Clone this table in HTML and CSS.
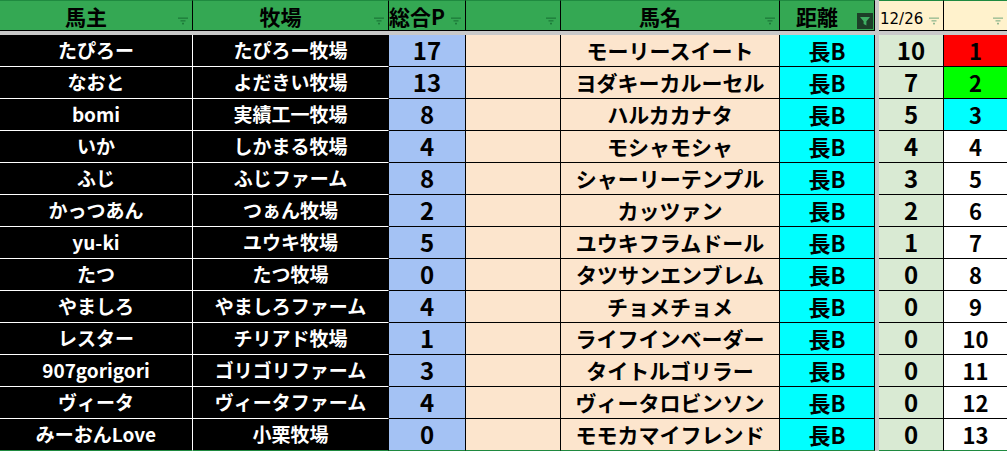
FILE: index.html
```html
<!DOCTYPE html>
<html lang="ja">
<head>
<meta charset="utf-8">
<link rel="stylesheet" href="styles.css">
</head>
<body>
<div class="sheet">
  <div class="row head">
    <div class="c w1 hg">馬主<svg class="flt" viewBox="0 0 10 8"><rect x="0" y="0.5" width="10" height="1.3"/><rect x="2.5" y="3.2" width="5" height="1.3"/><rect x="4" y="5.8" width="2" height="1.6"/></svg></div>
    <div class="c w2 hg">牧場<svg class="flt" viewBox="0 0 10 8"><rect x="0" y="0.5" width="10" height="1.3"/><rect x="2.5" y="3.2" width="5" height="1.3"/><rect x="4" y="5.8" width="2" height="1.6"/></svg></div>
    <div class="c w3 hg">総合P<svg class="flt" viewBox="0 0 10 8"><rect x="0" y="0.5" width="10" height="1.3"/><rect x="2.5" y="3.2" width="5" height="1.3"/><rect x="4" y="5.8" width="2" height="1.6"/></svg></div>
    <div class="c w4 hg"><svg class="flt" viewBox="0 0 10 8"><rect x="0" y="0.5" width="10" height="1.3"/><rect x="2.5" y="3.2" width="5" height="1.3"/><rect x="4" y="5.8" width="2" height="1.6"/></svg></div>
    <div class="c w5 hg">馬名<svg class="flt" viewBox="0 0 10 8"><rect x="0" y="0.5" width="10" height="1.3"/><rect x="2.5" y="3.2" width="5" height="1.3"/><rect x="4" y="5.8" width="2" height="1.6"/></svg></div>
    <div class="c w6 hg">距離<svg class="fbtn" viewBox="0 0 16 16"><rect width="16" height="16" fill="#1d3f28"/><path d="M3 4h10l-3.6 4.3v4.2l-2.8-1.4v-2.8z" fill="#3fae62"/></svg></div>
    <div class="gap"></div>
    <div class="c w7 hy"><span class="date">12/26</span><svg class="flt" viewBox="0 0 10 8"><rect x="0" y="0.5" width="10" height="1.3"/><rect x="2.5" y="3.2" width="5" height="1.3"/><rect x="4" y="5.8" width="2" height="1.6"/></svg></div>
    <div class="c w8 hy"><svg class="flt" viewBox="0 0 10 8"><rect x="0" y="0.5" width="10" height="1.3"/><rect x="2.5" y="3.2" width="5" height="1.3"/><rect x="4" y="5.8" width="2" height="1.6"/></svg></div>
  </div>
  <div class="strip"></div>

  <div class="row"><div class="c w1 bk">たぴろー</div><div class="c w2 bk bk2">たぴろー牧場</div><div class="c w3 bl">17</div><div class="c w4 pe"></div><div class="c w5 pe">モーリースイート</div><div class="c w6 cy">長B</div><div class="gap"></div><div class="c w7 lg">10</div><div class="c w8 rank red">1</div></div>
  <div class="row"><div class="c w1 bk">なおと</div><div class="c w2 bk bk2">よだきい牧場</div><div class="c w3 bl">13</div><div class="c w4 pe"></div><div class="c w5 pe">ヨダキーカルーセル</div><div class="c w6 cy">長B</div><div class="gap"></div><div class="c w7 lg">7</div><div class="c w8 rank grn">2</div></div>
  <div class="row"><div class="c w1 bk">bomi</div><div class="c w2 bk bk2">実績工一牧場</div><div class="c w3 bl">8</div><div class="c w4 pe"></div><div class="c w5 pe">ハルカカナタ</div><div class="c w6 cy">長B</div><div class="gap"></div><div class="c w7 lg">5</div><div class="c w8 rank cy">3</div></div>
  <div class="row"><div class="c w1 bk">いか</div><div class="c w2 bk bk2">しかまる牧場</div><div class="c w3 bl">4</div><div class="c w4 pe"></div><div class="c w5 pe">モシャモシャ</div><div class="c w6 cy">長B</div><div class="gap"></div><div class="c w7 lg">4</div><div class="c w8 rank">4</div></div>
  <div class="row"><div class="c w1 bk">ふじ</div><div class="c w2 bk bk2">ふじファーム</div><div class="c w3 bl">8</div><div class="c w4 pe"></div><div class="c w5 pe">シャーリーテンプル</div><div class="c w6 cy">長B</div><div class="gap"></div><div class="c w7 lg">3</div><div class="c w8 rank">5</div></div>
  <div class="row"><div class="c w1 bk">かっつあん</div><div class="c w2 bk bk2">つぁん牧場</div><div class="c w3 bl">2</div><div class="c w4 pe"></div><div class="c w5 pe">カッツァン</div><div class="c w6 cy">長B</div><div class="gap"></div><div class="c w7 lg">2</div><div class="c w8 rank">6</div></div>
  <div class="row"><div class="c w1 bk">yu-ki</div><div class="c w2 bk bk2">ユウキ牧場</div><div class="c w3 bl">5</div><div class="c w4 pe"></div><div class="c w5 pe">ユウキフラムドール</div><div class="c w6 cy">長B</div><div class="gap"></div><div class="c w7 lg">1</div><div class="c w8 rank">7</div></div>
  <div class="row"><div class="c w1 bk">たつ</div><div class="c w2 bk bk2">たつ牧場</div><div class="c w3 bl">0</div><div class="c w4 pe"></div><div class="c w5 pe">タツサンエンブレム</div><div class="c w6 cy">長B</div><div class="gap"></div><div class="c w7 lg">0</div><div class="c w8 rank">8</div></div>
  <div class="row"><div class="c w1 bk">やましろ</div><div class="c w2 bk bk2">やましろファーム</div><div class="c w3 bl">4</div><div class="c w4 pe"></div><div class="c w5 pe">チョメチョメ</div><div class="c w6 cy">長B</div><div class="gap"></div><div class="c w7 lg">0</div><div class="c w8 rank">9</div></div>
  <div class="row"><div class="c w1 bk">レスター</div><div class="c w2 bk bk2">チリアド牧場</div><div class="c w3 bl">1</div><div class="c w4 pe"></div><div class="c w5 pe">ライフインベーダー</div><div class="c w6 cy">長B</div><div class="gap"></div><div class="c w7 lg">0</div><div class="c w8 rank">10</div></div>
  <div class="row"><div class="c w1 bk">907gorigori</div><div class="c w2 bk bk2">ゴリゴリファーム</div><div class="c w3 bl">3</div><div class="c w4 pe"></div><div class="c w5 pe">タイトルゴリラー</div><div class="c w6 cy">長B</div><div class="gap"></div><div class="c w7 lg">0</div><div class="c w8 rank">11</div></div>
  <div class="row"><div class="c w1 bk">ヴィータ</div><div class="c w2 bk bk2">ヴィータファーム</div><div class="c w3 bl">4</div><div class="c w4 pe"></div><div class="c w5 pe">ヴィータロビンソン</div><div class="c w6 cy">長B</div><div class="gap"></div><div class="c w7 lg">0</div><div class="c w8 rank">12</div></div>
  <div class="row last"><div class="c w1 bk">みーおんLove</div><div class="c w2 bk bk2">小栗牧場</div><div class="c w3 bl">0</div><div class="c w4 pe"></div><div class="c w5 pe">モモカマイフレンド</div><div class="c w6 cy">長B</div><div class="gap"></div><div class="c w7 lg">0</div><div class="c w8 rank">13</div></div>
</div>
</body>
</html>
```
FILE: styles.css
```css
* { box-sizing: border-box; }
html, body { margin: 0; padding: 0; background: #ffffff; }
body {
  width: 1007px;
  height: 451px;
  overflow: hidden;
  font-family: "Noto Sans CJK JP", "Noto Sans", sans-serif;
  font-weight: 700;
  color: #000;
}
.sheet { display: flex; flex-direction: column; width: 1007px; }
.row { display: flex; height: 32px; }
.row.head { height: 31px; }
.strip { height: 4px; background: #c9c9c9; }

.c {
  position: relative;
  display: flex;
  align-items: center;
  justify-content: center;
  border-right: 1px solid #000;
  border-bottom: 1px solid #000;
  font-size: 21px;
  line-height: 1.2;
  white-space: nowrap;
}
.w1 { width: 193px; }
.w2 { width: 196px; }
.w3 { width: 77px; }
.w4 { width: 95px; }
.w5 { width: 219px; }
.w6 { width: 95px; }
.w7 { width: 65px; }
.w8 { width: 63px; border-right: none; }
.gap { width: 4px; background: #c9c9c9; }

.head .c {
  border-top: 1px solid #1f8a40;
  align-items: flex-end;
  padding: 0 20px 1px 0;
  font-size: 21px;
}
.hg { background: #34a853; }
.hy { background: #fff2cc; }
.date {
  font-family: "DejaVu Sans", sans-serif;
  font-weight: 400;
  font-size: 15px;
  padding-bottom: 1px;
}
.head .w7 { justify-content: flex-start; padding-left: 1px; }
.flt {
  position: absolute;
  right: 4px;
  bottom: 5px;
  width: 10px;
  height: 8px;
  fill: #1d7a3a;
}
.hy .flt { fill: #93b88f; }
.fbtn {
  position: absolute;
  right: 1px;
  top: 12px;
  width: 16px;
  height: 16px;
}

.bk {
  background: #000;
  color: #fff;
  font-size: 19px;
  border-right-color: #fff;
  border-bottom-color: #fff;
}
.bk2 { border-right-color: #000; }
.bl { background: #a4c2f4; font-size: 24px; }
.pe { background: #fce5cd; }
.cy { background: #00ffff; font-size: 22px; }
.lg { background: #d9ead3; font-size: 24px; }
.rank { background: #fff; font-size: 22px; }
.red { background: #ff0000; }
.grn { background: #00ff00; }
.rank.cy { background: #00ffff; }
.last .c { border-bottom-color: #1f8a40; }
```
